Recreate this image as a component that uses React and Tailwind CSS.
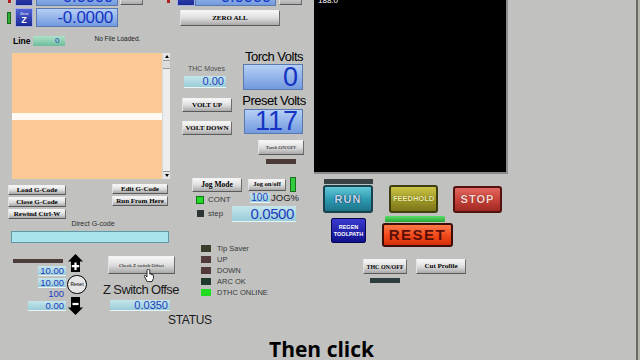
import React from 'react';

const Btn = ({ className = '', children }) => (
  <div
    className={`flex items-center justify-center bg-linear-to-b from-[#f7f7f7] via-[#dedede] to-[#a9a9a9] border border-t-[#f2f2f2] border-l-[#e2e2e2] border-r-[#6c6c6c] border-b-[#5a5a5a] font-['Liberation_Serif'] font-bold text-black leading-none whitespace-nowrap ${className}`}
  >
    {children}
  </div>
);

const Dro = ({ className = '', children }) => (
  <div
    className={`flex items-center justify-end pr-[4px] bg-linear-to-b from-[#b6cff5] to-[#739ade] border border-[#5a78b0] text-[#1634c4] leading-none ${className}`}
  >
    {children}
  </div>
);

const Field = ({ className = '', children }) => (
  <div
    className={`flex items-center justify-end pr-[2px] bg-linear-to-b from-[#c6e6ec] to-[#98ccd8] border-b border-[#e8f4f6] text-[#1c3cc0] leading-none ${className}`}
  >
    {children}
  </div>
);

const AxisIcon = ({ className = '', label, small }) => (
  <div
    className={`w-[18px] h-[19px] flex flex-col items-center justify-center bg-linear-to-b from-[#5262d6] to-[#1a2894] border border-[#a2b0e4] text-white leading-none ${className}`}
  >
    {small && <span className="text-[4px] leading-[5px]">{small}</span>}
    <span className="text-[9px] font-bold leading-[9px]">{label}</span>
  </div>
);

const UpArrow = () => (
  <svg width="15" height="18" viewBox="0 0 15 18">
    <path d="M7.5 0 L15 7.5 L12 7.5 L12 18 L3 18 L3 7.5 L0 7.5 Z" fill="#000" />
    <path d="M7.5 8.5 V16 M3.8 12.2 H11.2" stroke="#fff" strokeWidth="2.2" />
  </svg>
);

const DownArrow = () => (
  <svg width="15" height="18" viewBox="0 0 15 18">
    <path d="M7.5 18 L15 10.5 L12 10.5 L12 0 L3 0 L3 10.5 L0 10.5 Z" fill="#000" />
    <path d="M4.5 7 H10.5" stroke="#fff" strokeWidth="2.2" />
  </svg>
);

const Hand = () => (
  <svg width="10" height="14" viewBox="0 0 10 14">
    <path
      d="M3 1 V8 L1.6 6.6 C0.8 6 -0.1 6.9 0.5 7.7 L3.2 12.6 H8 L9.4 9.4 V6.2 C9.4 5.4 8.2 5.4 8.2 6.2 V5.6 C8.2 4.8 7 4.8 7 5.6 V5.1 C7 4.3 5.8 4.3 5.8 5.1 V1 C5.8 0.1 3 0.1 3 1 Z"
      fill="#fff"
      stroke="#000"
      strokeWidth="0.8"
    />
  </svg>
);

const statusLeds = [
  { label: 'Tip Saver', color: 'bg-[#3c3c2c]' },
  { label: 'UP', color: 'bg-[#52393a]' },
  { label: 'DOWN', color: 'bg-[#52393a]' },
  { label: 'ARC OK', color: 'bg-[#203a2c]' },
  { label: 'DTHC ONLINE', color: 'bg-[#22dc22]' },
];

export default function App() {
  return (
    <div className="relative w-[640px] h-[360px] overflow-hidden flex bg-[#c1c1c0] font-['Liberation_Sans'] text-black">
      {/* left + middle controls */}
      <div className="w-[312px] flex flex-col shrink-0">
        {/* DRO rows */}
        <div className="flex -mt-[13px]">
          <div className="w-[166px] flex flex-col gap-[2px]">
            <div className="flex items-center h-[19px]">
              <div className="ml-[8px] w-[3px] h-[12px] bg-[#b02020]" />
              <AxisIcon className="ml-[4px]" label="X" />
              <Dro className="ml-[3px] w-[82px] h-[19px] text-[17px] tracking-[-0.3px]">-0.0000</Dro>
              <Btn className="ml-[2px] w-[23px] h-[17px]" />
            </div>
            <div className="flex items-center h-[19px]">
              <div className="ml-[7px] w-[4px] h-[12px] bg-[#2fae34] border border-[#186a1a]" />
              <AxisIcon className="ml-[4px]" small="Zero" label="Z" />
              <Dro className="ml-[3px] w-[82px] h-[19px] text-[17px] tracking-[-0.3px]">-0.0000</Dro>
            </div>
          </div>
          <div className="flex flex-col">
            <div className="flex items-center h-[19px]">
              <div className="ml-[1px] w-[3px] h-[12px] bg-[#b02020]" />
              <AxisIcon className="ml-[7px]" label="Y" />
              <Dro className="w-[81px] h-[19px] text-[17px] tracking-[-0.3px]">-0.0000</Dro>
              <Btn className="ml-[3px] w-[23px] h-[17px]" />
            </div>
            <Btn className="mt-[4px] ml-[14px] w-[100px] h-[16px] text-[7px]">ZERO ALL</Btn>
          </div>
        </div>

        {/* G-code panel + THC / torch volts */}
        <div className="flex h-[150px]">
          <div className="w-[180px] flex flex-col">
            <div className="mt-[9px] h-[10px] flex items-center">
              <span className="ml-[13px] text-[8.5px] font-bold leading-none">Line</span>
              <div className="ml-[3px] w-[32px] h-[10px] flex items-center justify-end pr-[6px] bg-linear-to-b from-[#aee2c8] to-[#6cbc9c] text-[8px] text-[#1c3cc0] leading-none">
                0
              </div>
              <span className="ml-[29px] -mt-[4px] text-[6.5px] leading-none text-[#202020]">No File Loaded.</span>
            </div>
            <div className="mt-[7px] ml-[12px] w-[158px] h-[126px] flex shrink-0">
              <div className="flex-1 flex flex-col bg-[#fcc994]">
                <div className="h-[60px]" />
                <div className="h-[7px] bg-[#fffaf4]" />
              </div>
              <div className="w-[8px] flex flex-col bg-[#ededed] border-l border-[#d8d8d8]">
                <div className="h-[8px] flex items-center justify-center bg-[#e4e4e4] border-b border-[#9a9a9a]">
                  <div className="w-0 h-0 border-l-[2px] border-r-[2px] border-b-[3px] border-l-transparent border-r-transparent border-b-black" />
                </div>
                <div className="h-[8px] bg-[#dcdcdc] border-b border-[#9a9a9a]" />
                <div className="flex-1" />
                <div className="h-[8px] flex items-center justify-center bg-[#e4e4e4] border-t border-[#9a9a9a]">
                  <div className="w-0 h-0 border-l-[2px] border-r-[2px] border-t-[3px] border-l-transparent border-r-transparent border-t-black" />
                </div>
              </div>
            </div>
          </div>

          <div className="flex">
            <div className="ml-[2px] w-[52px] flex flex-col">
              <span className="mt-[38px] ml-[6px] h-[8px] text-[7px] leading-[8px] text-[#4c4c4c] whitespace-nowrap">THC Moves</span>
              <Field className="mt-[3px] ml-[2px] w-[42px] h-[12px] text-[11px]">0.00</Field>
              <Btn className="mt-[10px] w-[50px] h-[14px] text-[7px]">VOLT UP</Btn>
              <Btn className="mt-[9px] w-[50px] h-[14px] text-[7px]">VOLT DOWN</Btn>
            </div>
            <div className="ml-[8px] w-[64px] flex flex-col">
              <span className="mt-[23px] h-[14px] text-[13px] leading-[14px] tracking-[-0.5px] text-center whitespace-nowrap">Torch Volts</span>
              <Dro className="ml-[1px] w-[60px] h-[26px] text-[27px] text-[#1424b4]">0</Dro>
              <span className="mt-[3px] h-[15px] text-[13px] leading-[15px] tracking-[-0.5px] text-center whitespace-nowrap">Preset Volts</span>
              <Dro className="mt-[1px] ml-[2px] w-[59px] h-[25px] text-[27px] text-[#1424b4]">117</Dro>
              <Btn className="mt-[6px] ml-[16px] w-[46px] h-[15px] text-[5px] font-normal font-['Liberation_Sans']">Torch ON/OFF</Btn>
              <div className="mt-[4px] ml-[24px] w-[30px] h-[5px] bg-[#4c3a38]" />
            </div>
          </div>
        </div>

        {/* file buttons + jog */}
        <div className="flex h-[68px]">
          <div className="w-[180px] flex flex-col">
            <div className="flex mt-[7px]">
              <div className="ml-[8px] mt-[1px] w-[58px] flex flex-col gap-[2px]">
                <Btn className="h-[10px] text-[7px]">Load G-Code</Btn>
                <Btn className="h-[10px] text-[7px]">Close G-Code</Btn>
                <Btn className="h-[10px] text-[7px]">Rewind Ctrl-W</Btn>
              </div>
              <div className="ml-[46px] w-[56px] flex flex-col gap-[2px]">
                <Btn className="h-[10px] text-[7px]">Edit G-Code</Btn>
                <Btn className="h-[10px] text-[7px]">Run From Here</Btn>
              </div>
            </div>
            <span className="mt-[1px] ml-[14px] w-[158px] h-[8px] text-[7px] leading-[8px] text-center text-[#303030]">Direct G-code</span>
            <div className="mt-[3px] ml-[11px] w-[158px] h-[12px] bg-[#a9e3ec] border border-[#5e9aa6]" />
          </div>

          <div className="flex flex-col">
            <div className="h-[15px] flex items-center">
              <Btn className="ml-[12px] w-[50px] h-[14px] text-[7.5px]">Jog Mode</Btn>
              <Btn className="ml-[6px] w-[38px] h-[12px] text-[6.5px]">Jog on/off</Btn>
              <div className="ml-[4px] w-[6px] h-[15px] bg-[#2fce3a] border border-[#1c6e22]" />
            </div>
            <div className="h-[12px] flex items-center">
              <div className="ml-[16px] mt-[3px] w-[8px] h-[8px] bg-[#22d828] border border-[#157018]" />
              <span className="ml-[4px] mt-[3px] w-[42px] text-[8px] leading-none text-[#3a3a3a]">CONT</span>
              <Field className="w-[20px] h-[10px] text-[10px]">100</Field>
              <span className="ml-[1px] text-[9.5px] leading-none text-[#202020]">JOG%</span>
            </div>
            <div className="mt-[1px] h-[17px] flex items-center">
              <div className="ml-[17px] w-[7px] h-[7px] bg-[#2c3634]" />
              <span className="ml-[4px] w-[23px] text-[8px] leading-none text-[#3a3a3a]">step</span>
              <Field className="ml-[1px] w-[64px] h-[16px] text-[15px] tracking-[-0.4px] pr-[1px]">0.0500</Field>
            </div>
          </div>
        </div>

        {/* jog arrows, z switch offset, status leds */}
        <div className="flex">
          <div className="w-[67px] flex flex-col items-end">
            <div className="mt-[14px] mr-[4px] w-[50px] h-[4px] bg-[#4c3c3a]" />
            <Field className="mt-[3px] mr-[1px] w-[28px] h-[10px] text-[9.5px]">10.00</Field>
            <Field className="mt-[2px] mr-[1px] w-[28px] h-[10px] text-[9.5px]">10.00</Field>
            <span className="mt-[1px] mr-[3px] h-[10px] text-[9.5px] leading-[10px] text-[#1c3cc0]">100</span>
            <Field className="mt-[2px] mr-[1px] w-[38px] h-[10px] text-[9.5px]">0.00</Field>
          </div>
          <div className="w-[20px] flex flex-col">
            <div className="mt-[9px] ml-[1px] h-[18px]">
              <UpArrow />
            </div>
            <div className="mt-[3px] w-[20px] h-[19px] rounded-full flex items-center justify-center bg-[#e6e6e6] border border-black text-[5px] leading-none">
              Reset
            </div>
            <div className="mt-[3px] ml-[1px] h-[18px]">
              <DownArrow />
            </div>
          </div>

          <div className="ml-[16px] w-[98px] flex flex-col">
            <div className="relative mt-[11px] ml-[5px] w-[67px] h-[18px]">
              <Btn className="w-[67px] h-[18px] text-[5px] font-normal font-['Liberation_Sans']">Check Z switch Offset</Btn>
              <div className="absolute left-[36px] top-[13px]">
                <Hand />
              </div>
            </div>
            <span className="mt-[8px] h-[15px] text-[13px] leading-[15px] tracking-[-0.6px] whitespace-nowrap text-[#1a1a1a]">Z Switch Offse</span>
            <Field className="mt-[3px] ml-[7px] w-[60px] h-[11px] text-[11px]">0.0350</Field>
            <span className="mt-[3px] ml-[65px] h-[12px] text-[12px] leading-[12px] tracking-[-0.3px] whitespace-nowrap text-[#1a1a1a]">STATUS</span>
          </div>

          <div className="-mt-[2px] flex flex-col">
            {statusLeds.map(({ label, color }) => (
              <div key={label} className="h-[11px] flex items-center">
                <div className={`w-[10px] h-[7px] ${color}`} />
                <span className="ml-[6px] text-[7.5px] leading-none text-[#383838] whitespace-nowrap">{label}</span>
              </div>
            ))}
          </div>
        </div>
      </div>

      {/* toolpath screen + cycle buttons */}
      <div className="w-[324px] flex flex-col shrink-0">
        <div className="ml-[2px] w-[194px] h-[174px] bg-black border-r-2 border-b-2 border-[#8c8c8c] overflow-hidden">
          <div className="-mt-[3px] ml-[4px] text-[8px] leading-[8px] text-white">188.0</div>
        </div>

        <div className="mt-[5px] flex items-end">
          <div className="ml-[11px] flex flex-col">
            <div className="ml-[1px] w-[49px] h-[5px] bg-[#384242]" />
            <div className="mt-[1px] w-[50px] h-[28px] flex items-center justify-center rounded-[3px] bg-linear-to-b from-[#64c8d8] via-[#2c9cb2] to-[#1c7488] border-2 border-[#17424e] text-[11px] font-bold tracking-[1px] text-[#c6dcec] [text-shadow:0_0_1px_#0a2450,0_0_1px_#0a2450]">
              RUN
            </div>
          </div>
          <div className="ml-[16px] w-[49px] h-[28px] flex items-center justify-center rounded-[3px] bg-linear-to-b from-[#cac444] via-[#a29c2a] to-[#7c7418] border-2 border-[#3e3e10] text-[7.5px] font-bold text-[#f2f0a8] [text-shadow:0_0_1px_#3a3a08]">
            FEEDHOLD
          </div>
          <div className="ml-[15px] w-[49px] h-[27px] flex items-center justify-center rounded-[3px] bg-linear-to-b from-[#e2665e] via-[#c8423a] to-[#a02a22] border-2 border-[#521212] text-[11px] font-bold tracking-[1px] text-[#fad8d2] [text-shadow:0_0_1px_#4a0c0c]">
            STOP
          </div>
        </div>

        <div className="mt-[3px] flex">
          <div className="ml-[19px] mt-[2px] w-[35px] h-[25px] flex flex-col items-center justify-center rounded-[2px] bg-linear-to-b from-[#3a3ad0] to-[#10108c] border border-[#06064e] text-[5.5px] font-bold leading-[7px] text-white">
            <span>REGEN</span>
            <span>TOOLPATH</span>
          </div>
          <div className="ml-[16px] flex flex-col">
            <div className="ml-[3px] w-[60px] h-[6px] bg-linear-to-b from-[#5ce06a] to-[#24a636] rounded-[1px]" />
            <div className="mt-[1px] w-[71px] h-[24px] flex items-center justify-center rounded-[3px] bg-linear-to-b from-[#ff7a48] via-[#f24a1a] to-[#d6300a] border-2 border-[#3e0e06] text-[15px] font-black tracking-[1.5px] text-[#5a1008]">
              RESET
            </div>
          </div>
        </div>

        <div className="mt-[12px] flex">
          <div className="ml-[51px] flex flex-col">
            <Btn className="w-[44px] h-[15px] text-[6px]">THC ON/OFF</Btn>
            <div className="mt-[4px] ml-[7px] w-[30px] h-[5px] bg-[#2e3e3e]" />
          </div>
          <Btn className="ml-[9px] w-[50px] h-[15px] text-[7px]">Cut Profile</Btn>
        </div>
      </div>

      {/* window edge */}
      <div className="w-[2px] h-full bg-[#6a6a62] shrink-0" />
      <div className="w-[2px] h-full bg-[#b4b4ac] shrink-0" />

      {/* video caption */}
      <div className="absolute left-[269px] top-[339px] text-[21px] font-bold leading-none font-['Open_Sans'] text-black whitespace-nowrap">
        Then click
      </div>
    </div>
  );
}
